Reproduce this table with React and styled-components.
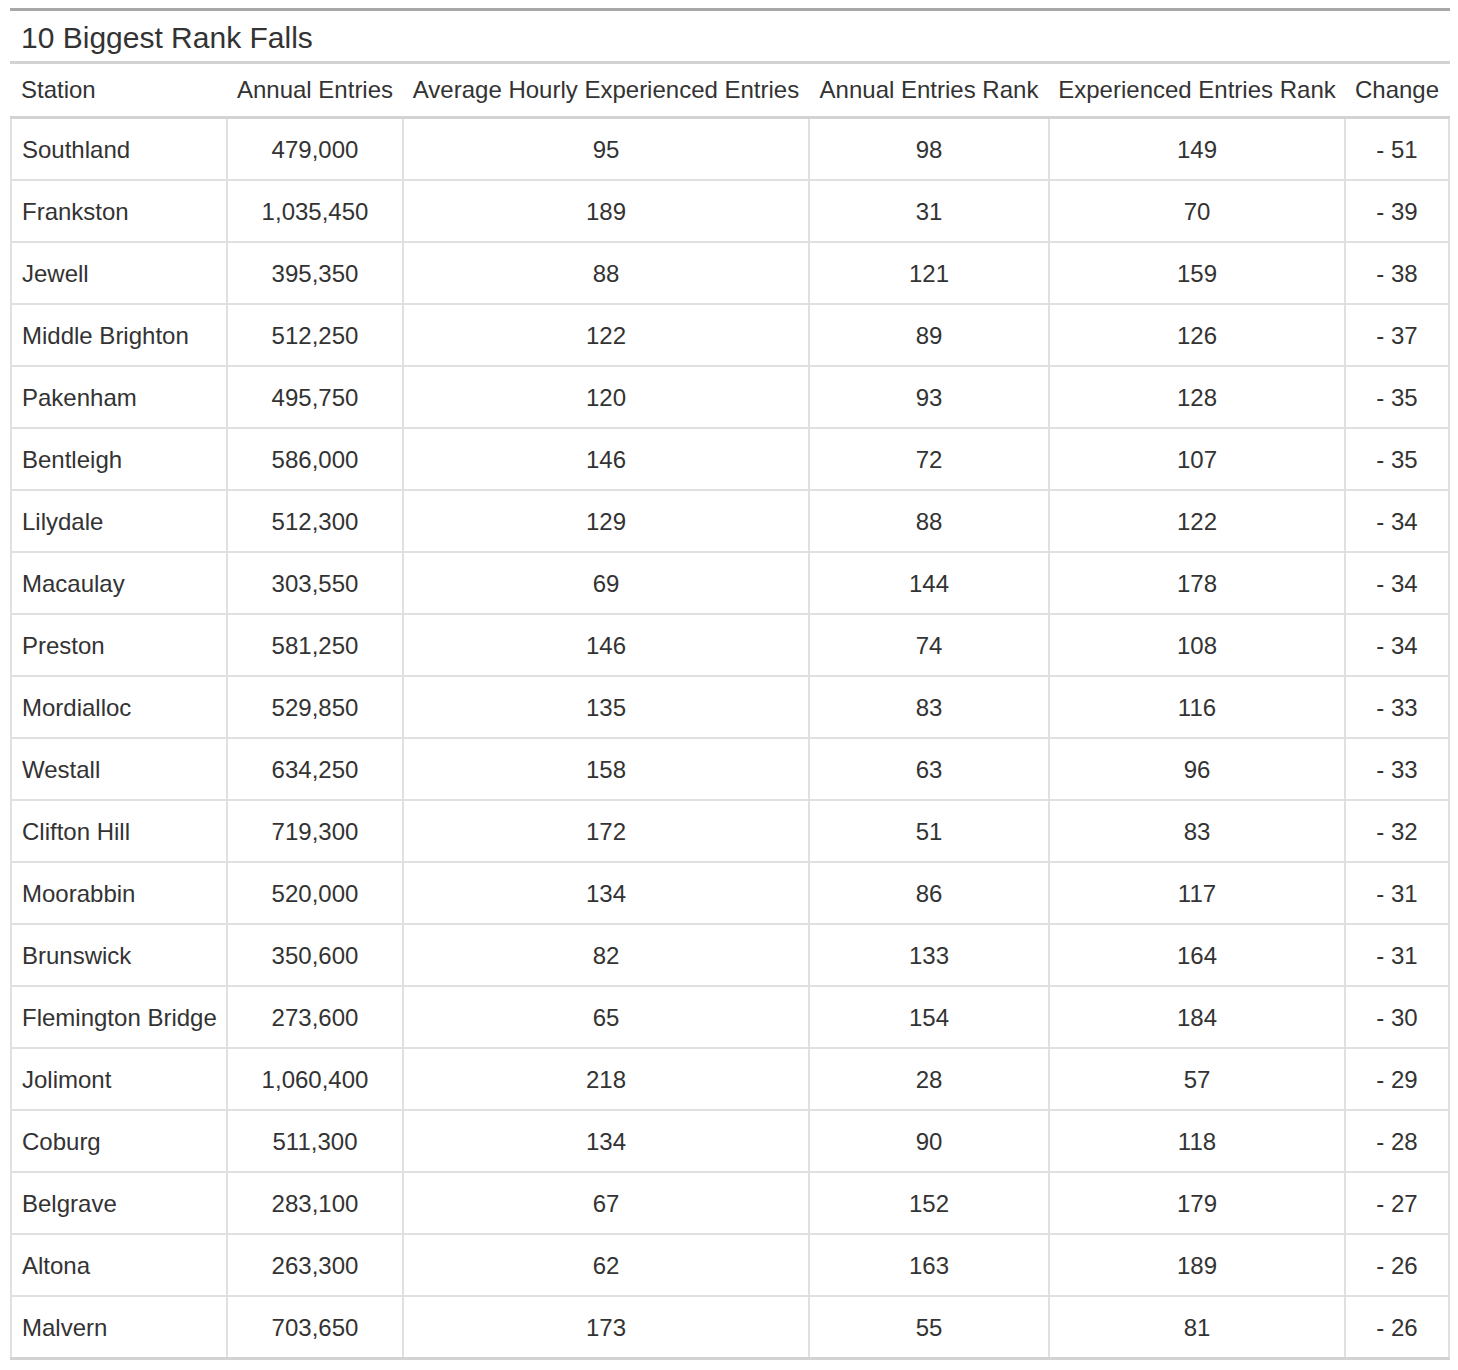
import React from 'react';
import styled, { createGlobalStyle } from 'styled-components';

const GlobalStyle = createGlobalStyle`
  body {
    margin: 0;
    background: #fff;
    font-family: "Liberation Sans", Arial, sans-serif;
    color: #333;
  }
`;

const Panel = styled.div`
  margin: 8px 8px 0 10px;
  width: 1440px;
  border-top: 3px solid #a8a8a8;
`;

const Title = styled.h3`
  margin: 0;
  height: 46px;
  line-height: 46px;
  padding: 4px 0 0 11px;
  font-size: 30px;
  font-weight: normal;
  border-bottom: 3px solid #d3d3d3;
`;

const Table = styled.table`
  width: 1438px;
  border-collapse: collapse;
  table-layout: fixed;
  font-size: 24px;
`;

const HeadCell = styled.th`
  height: 52px;
  padding: 0 ${p => (p.$left ? '10px' : '4px')};
  font-weight: normal;
  text-align: ${p => (p.$left ? 'left' : 'center')};
  border-bottom: 3px solid #d3d3d3;
  white-space: nowrap;
  vertical-align: middle;
`;

const Row = styled.tr`
  &:last-child td {
    border-bottom: 3px solid #d3d3d3;
  }
`;

const Cell = styled.td`
  height: 58px;
  padding: 2px ${p => (p.$left ? '10px' : '4px')} 0;
  text-align: ${p => (p.$left ? 'left' : 'center')};
  border: 2px solid #e0e0e0;
  vertical-align: middle;
  white-space: nowrap;
`;

const columns = [
  { label: 'Station', width: 216, left: true },
  { label: 'Annual Entries', width: 176 },
  { label: 'Average Hourly Experienced Entries', width: 406 },
  { label: 'Annual Entries Rank', width: 240 },
  { label: 'Experienced Entries Rank', width: 296 },
  { label: 'Change', width: 104 },
];

const rows = [
  ['Southland', '479,000', 95, 98, 149, 51],
  ['Frankston', '1,035,450', 189, 31, 70, 39],
  ['Jewell', '395,350', 88, 121, 159, 38],
  ['Middle Brighton', '512,250', 122, 89, 126, 37],
  ['Pakenham', '495,750', 120, 93, 128, 35],
  ['Bentleigh', '586,000', 146, 72, 107, 35],
  ['Lilydale', '512,300', 129, 88, 122, 34],
  ['Macaulay', '303,550', 69, 144, 178, 34],
  ['Preston', '581,250', 146, 74, 108, 34],
  ['Mordialloc', '529,850', 135, 83, 116, 33],
  ['Westall', '634,250', 158, 63, 96, 33],
  ['Clifton Hill', '719,300', 172, 51, 83, 32],
  ['Moorabbin', '520,000', 134, 86, 117, 31],
  ['Brunswick', '350,600', 82, 133, 164, 31],
  ['Flemington Bridge', '273,600', 65, 154, 184, 30],
  ['Jolimont', '1,060,400', 218, 28, 57, 29],
  ['Coburg', '511,300', 134, 90, 118, 28],
  ['Belgrave', '283,100', 67, 152, 179, 27],
  ['Altona', '263,300', 62, 163, 189, 26],
  ['Malvern', '703,650', 173, 55, 81, 26],
];

export default function App() {
  return (
    <React.Fragment>
      <GlobalStyle />
      <Panel>
        <Title>10 Biggest Rank Falls</Title>
        <Table>
          <colgroup>
            {columns.map(c => (
              <col key={c.label} style={{ width: c.width }} />
            ))}
          </colgroup>
          <thead>
            <tr>
              {columns.map(c => (
                <HeadCell key={c.label} $left={c.left}>
                  {c.label}
                </HeadCell>
              ))}
            </tr>
          </thead>
          <tbody>
            {rows.map(r => (
              <Row key={r[0]}>
                <Cell $left>{r[0]}</Cell>
                <Cell>{r[1]}</Cell>
                <Cell>{r[2]}</Cell>
                <Cell>{r[3]}</Cell>
                <Cell>{r[4]}</Cell>
                <Cell>- {r[5]}</Cell>
              </Row>
            ))}
          </tbody>
        </Table>
      </Panel>
    </React.Fragment>
  );
}
